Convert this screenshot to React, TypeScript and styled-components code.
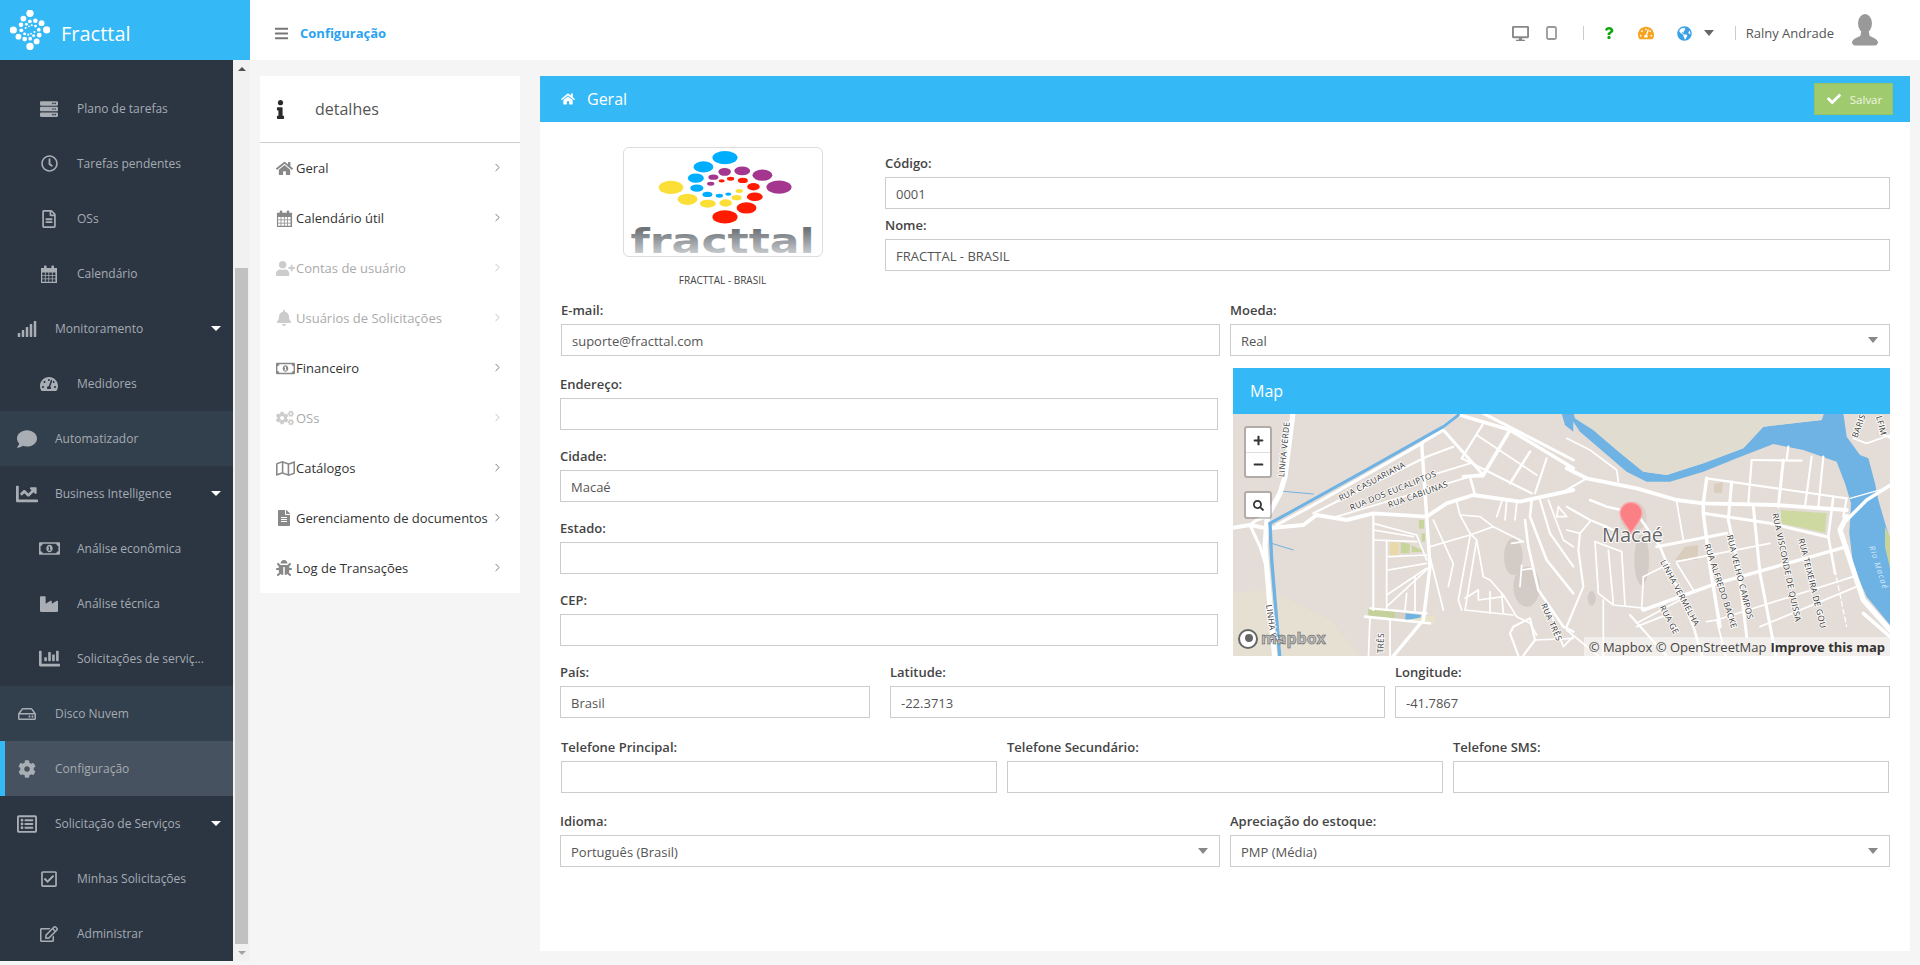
import React from 'react';
import styled, { createGlobalStyle } from 'styled-components';
import { ChevronRight } from 'lucide-react';
import {
  FaBars,
  FaBell,
  FaBug,
  FaChartBar,
  FaChartLine,
  FaCheck,
  FaCog,
  FaCogs,
  FaComment,
  FaDesktop,
  FaFileAlt,
  FaGlobeAmericas,
  FaHome,
  FaIndustry,
  FaInfo,
  FaMinus,
  FaPlus,
  FaQuestion,
  FaRegCheckSquare,
  FaRegClock,
  FaRegEdit,
  FaRegFileAlt,
  FaRegHdd,
  FaRegListAlt,
  FaRegMap,
  FaRegMoneyBillAlt,
  FaSearch,
  FaServer,
  FaSignal,
  FaTachometerAlt,
  FaUserPlus,
} from 'react-icons/fa';

const BLUE = '#35b8f6';

const GlobalStyle = createGlobalStyle`
  * { box-sizing: border-box; }
  html, body { margin: 0; height: 100%; overflow: hidden; }
  body { background: #f5f5f5; font-family: "Open Sans", "Liberation Sans", sans-serif; color: #555; }
`;

// Icons that the packages do not carry in this shape

const cells = (() => {
  let d = 'M1 3h16v15H1z';
  for (let r = 0; r < 3; r++) {
    for (let c = 0; c < 4; c++) {
      d += `M${2.2 + c * 3.5} ${7.4 + r * 3.4}h2.7v2.6h-2.7z`;
    }
  }
  return d;
})();

const CalendarIcon = ({ size = 18 }: { size?: number }) => (
  <svg width={size} height={size} viewBox="0 0 18 18" fill="currentColor">
    <path fillRule="evenodd" d={cells} />
    <rect x="4" y="0.5" width="2.6" height="4.5" rx="1" />
    <rect x="11.4" y="0.5" width="2.6" height="4.5" rx="1" />
  </svg>
);

const TabletIcon = () => (
  <svg width="11" height="14" viewBox="0 0 11 14">
    <rect x="1" y="1" width="9" height="12" rx="1.5" fill="#fff" stroke="#999" strokeWidth="1.8" />
  </svg>
);

const Avatar = () => (
  <svg width="26" height="32" viewBox="0 0 28 32" fill="#999" preserveAspectRatio="none">
    <ellipse cx="14" cy="9.5" rx="7.5" ry="9.5" />
    <path d="M10 17h8l1 5c4 1.5 8 3 9 6 0 2-1 3-3 3.500H3c-2-.5-3-1.500-3-3.500 1-3 5-4.500 9-6z" />
  </svg>
);

// [cx, cy, rx, ry, colour], read off the company logo
const spiral: [number, number, number, number, string][] = [
  [375, 82, 38, 20, '#00aeff'], [310, 110, 30, 17, '#00aeff'], [287, 144, 24, 14, '#00aeff'],
  [290, 174, 20, 11, '#00aeff'], [322, 193, 15, 8, '#00aeff'], [358, 197, 11, 6, '#00aeff'], [385, 192, 9, 5, '#00aeff'],
  [538, 171, 38, 20, '#a5368f'], [488, 135, 30, 17, '#a5368f'], [427, 122, 24, 13, '#a5368f'],
  [374, 125, 19, 12, '#a5368f'], [340, 141, 15, 8, '#a5368f'], [332, 161, 11, 6, '#a5368f'],
  [375, 261, 38, 20, '#ff1a00'], [440, 234, 30, 17, '#ff1a00'], [465, 200, 24, 13, '#ff1a00'],
  [461, 170, 19, 11, '#ff1a00'], [429, 151, 15, 8, '#ff1a00'], [392, 146, 11, 6, '#ff1a00'], [365, 152, 9, 5, '#ff1a00'],
  [212, 172, 37, 20, '#fbdf36'], [262, 208, 30, 17, '#fbdf36'], [323, 221, 24, 12, '#fbdf36'],
  [377, 219, 19, 11, '#fbdf36'], [410, 203, 15, 8, '#fbdf36'], [418, 183, 11, 6, '#fbdf36'],
];

const BrandMark = () => (
  <svg width="40" height="40" viewBox="30 30 120 120" fill="#fff">
    {spiral.map(([x, y, rx], i) => (
      <circle key={i} cx={90 + (x - 375) * 0.307} cy={90 + (y - 172) * 0.555} r={rx * 0.29} />
    ))}
  </svg>
);

const CompanyLogo = () => (
  <LogoSvg width="198" height="108" viewBox="71 53 596 326">
    <defs>
      <linearGradient id="wordmark" x1="0" y1="0" x2="0" y2="1">
        <stop offset="0.2" stopColor="#6f7479" />
        <stop offset="0.8" stopColor="#c4c8cb" />
      </linearGradient>
    </defs>
    {spiral.map(([x, y, rx, ry, fill], i) => (
      <ellipse key={i} cx={x} cy={y} rx={rx} ry={ry} fill={fill} />
    ))}
    <text x="90" y="369" fontFamily="DejaVu Sans, sans-serif" fontWeight="700" fontSize="102" textLength="556" lengthAdjust="spacingAndGlyphs" fill="url(#wordmark)">
      fracttal
    </text>
  </LogoSvg>
);

// Roads of the map: [width, "x,y x,y ..."], in the coordinates of the two crops of the street map
const westRoads: [number, string][] = [
  [12, '190,150 165,350 150,400 112,470 105,560 120,740 135,900'],
  [9, '0,505 60,495 110,505 220,495 260,465 350,480 430,460 590,470 650,430 730,405 870,425 1030,390'],
  [7, '60,495 90,560 112,630'],
  [7, '60,495 80,480 112,470'],
  [7, '140,495 250,435 575,250 690,160'],
  [5, '250,460 550,310 590,290 670,260'],
  [4, '320,470 720,350 760,350'],
  [4, '590,350 720,310'],
  [8, '575,250 590,470 600,620 580,780 480,900'],
  [8, '690,165 840,210 1030,325'],
  [7, '760,160 1030,300'],
  [7, '590,240 640,210 760,345'],
  [8, '840,210 760,345 700,350'],
  [5, '760,190 695,295 905,400'],
  [4, '740,225 920,345'],
  [6, '900,275 840,370'],
  [5, '950,295 915,400'],
  [6, '720,350 735,405'],
  [5, '430,460 430,750'],
  [4, '430,490 560,525 590,600'],
  [4, '430,510 550,530'],
  [4, '430,540 560,545'],
  [4, '470,540 470,745'],
  [4, '475,590 590,585'],
  [4, '475,630 590,610'],
  [4, '470,705 590,625'],
  [4, '470,740 600,620'],
  [5, '420,745 590,760'],
  [6, '405,770 600,790'],
  [4, '420,770 415,900'],
  [4, '480,780 480,900'],
  [4, '530,700 525,750'],
  [4, '555,650 555,755'],
  [4, '600,560 720,525 790,500 880,545'],
  [4, '610,480 660,590 670,610 655,680'],
  [4, '680,425 690,465 720,520 740,540 760,650 780,660 820,705 860,770 900,790 920,825'],
  [4, '690,465 750,470 790,500'],
  [4, '740,540 705,750 850,765'],
  [4, '720,530 685,720 695,750'],
  [4, '745,690 705,715'],
  [4, '745,690 745,720 820,710'],
  [4, '780,695 780,760'],
  [4, '815,700 820,760'],
  [4, '845,550 880,545'],
  [4, '875,615 870,680'],
  [4, '875,630 910,625'],
  [6, '885,480 895,560 925,690 1000,800 1030,815'],
  [6, '905,420 900,470 950,600 1030,700'],
  [5, '930,420 960,520 1030,620'],
  [4, '955,420 1000,540 1030,560'],
  [4, '800,470 815,425'],
  [4, '830,425 825,480'],
  [4, '860,430 855,480'],
  [5, '850,800 900,775 915,840 870,900 840,820 850,800'],
  [4, '915,840 1030,835'],
  [4, '950,725 1000,860 1030,830'],
  [4, '985,440 1010,470 980,470 985,440'],
  [4, '600,590 640,750'],
];

const eastRoads: [number, string][] = [
  [9, '-10,325 50,355 200,385 320,420 400,430 620,435 830,450'],
  [4, '-10,235 60,270 140,330 145,365'],
  [5, '-10,390 50,355'],
  [7, '400,460 600,490 770,530'],
  [5, '410,355 830,415'],
  [8, '410,355 400,430 400,460 420,620 450,800'],
  [7, '485,365 475,480 505,620 530,830'],
  [5, '545,300 535,430'],
  [5, '545,300 695,302'],
  [7, '640,300 625,440'],
  [5, '655,260 650,300'],
  [5, '725,290 705,440'],
  [5, '760,290 745,440'],
  [6, '790,410 775,530 795,640'],
  [5, '830,415 820,470'],
  [7, '260,560 470,520'],
  [8, '220,750 440,670 830,560'],
  [7, '550,440 570,640 620,900'],
  [6, '200,460 270,560 370,800 400,900'],
  [4, '320,425 340,540'],
  [4, '320,605 600,550'],
  [4, '220,650 300,610'],
  [4, '320,610 370,690'],
  [4, '200,790 330,720'],
  [4, '220,650 215,750'],
  [12, '830,470 810,510 830,570 880,720 960,810'],
  [8, '830,480 890,420 970,370'],
  [4, '440,780 850,650'],
  [4, '570,800 860,680'],
  [4, '410,785 440,780 470,900'],
  [8, '880,760 960,830'],
  [5, '180,765 300,900'],
  [4, '200,800 300,760'],
  [4, '-10,810 100,900'],
  [4, '100,720 100,900'],
  [4, '75,545 85,700 130,735 230,745'],
  [4, '75,545 155,575 165,735'],
  [4, '115,570 130,730'],
  [5, '-10,440 60,480 110,500 130,510'],
  [4, '-10,510 30,520 60,485'],
  [5, '30,520 25,570 40,680 -10,800'],
  [6, '60,420 110,440 155,450'],
  [4, '850,235 890,250 960,225'],
  [5, '930,220 965,235'],
  [3, '840,415 930,390'],
];

const roadLabels: [string, number, number, number][] = [
  ['RUA CASUARIANA', 332, 424, -28],
  ['RUA DOS EUCALIPTOS', 364, 452, -22],
  ['RUA CABIÚNAS', 478, 444, -20],
  ['LINHA VERDE', 162, 352, -84],
  ['LINHA VE', 108, 735, 82],
  ['TRÊS', 460, 880, -88],
  ['RUA TRÊS', 932, 735, 66],
];

const eastLabels: [string, number, number, number][] = [
  ['LINHA VERMELHA', 270, 605, 62],
  ['RUA GE', 268, 742, 62],
  ['RUA ALFREDO BACKE', 403, 555, 72],
  ['RUA VELHO CAMPOS', 470, 527, 76],
  ['RUA VISCONDE DE QUISSA', 607, 462, 78],
  ['RUA TEIXEIRA DE GOU', 685, 538, 76],
  ['BARIS', 862, 235, -70],
  ['LFIM', 918, 170, 75],
];

const StreetMap = () => (
  <svg width="657" height="242" viewBox="0 0 657 242">
    <rect width="657" height="242" fill="#e4dcd6" />
    <g transform="translate(-3,-54) scale(0.33333)">
      <polygon points="0,700 120,690 300,780 400,900 0,900" fill="#e5e0d2" />
      <polygon points="995,160 1005,195 1030,215 1030,160" fill="#6fb2e4" />
      <ellipse cx="850" cy="590" rx="28" ry="55" fill="#d3ccc6" />
      <ellipse cx="890" cy="680" rx="40" ry="60" fill="#d3ccc6" />
      <rect x="480" y="547" width="25" height="40" fill="#e8d9a9" />
      <polygon points="512,547 540,552 538,580 512,580" fill="#c8d59a" />
      <polygon points="545,556 585,575 545,577" fill="#c8d59a" />
      <polygon points="415,745 495,755 495,775 415,770" fill="#c4d19a" />
      <polygon points="495,755 530,760 528,780 495,776" fill="#d6cfc4" />
      <polygon points="527,760 573,765 568,786 525,783" fill="#6fb2e4" />
      <polygon points="530,780 615,765 615,790" fill="#e8e2c9" />
      <rect x="567" y="480" width="15" height="26" fill="#c8d59a" />
      <rect x="575" y="520" width="10" height="25" fill="#c8d59a" />
      <g fill="none" strokeLinejoin="round" strokeLinecap="round">
        <polyline points="160,394 250,402" stroke="#6fb2e4" strokeWidth="3" />
        <polyline points="125,550 190,570" stroke="#6fb2e4" strokeWidth="3" />
        {westRoads.map(([w, pts], i) => (
          <polyline key={i} points={pts} stroke="#fff" strokeWidth={w * 1.3} />
        ))}
        <polyline points="120,490 400,335 640,200 685,165" stroke="#6fb2e4" strokeWidth="9" />
        <polyline points="120,490 125,600 150,900" stroke="#6fb2e4" strokeWidth="10" />
      </g>
      {roadLabels.map(([t, x, y, r]) => (
        <MapLabel key={t + x} x={x} y={y} transform={`rotate(${r} ${x} ${y})`}>{t}</MapLabel>
      ))}
    </g>
    <g transform="translate(337,-54) scale(0.33333)">
      <polygon
        points="0,170 30,215 100,275 170,335 230,365 300,365 400,335 500,295 610,252 700,270 800,305 825,370 843,430 838,520 850,620 890,710 960,795 960,540 925,420 915,370 895,295 870,285 830,230 820,160 760,160 755,180 580,200 520,265 400,310 290,345 220,335 140,270 70,210 15,175 12,160 0,160"
        fill="#6fb2e4"
      />
      <polygon points="12,160 15,175 70,210 140,270 220,335 290,345 400,310 520,265 580,200 755,180 762,160" fill="#e0dccf" />
      <polygon points="633,450 770,460 765,518 633,490" fill="#cdd9a0" />
      <polygon points="945,500 960,530 960,625 945,560" fill="#c8d59a" />
      <polygon points="432,372 458,366 456,398 432,398" fill="#d9cdbd" />
      <polygon points="315,600 345,560 385,555 382,600" fill="#d9cdbd" />
      <ellipse cx="215" cy="600" rx="22" ry="75" fill="#d3ccc6" />
      <ellipse cx="190" cy="470" rx="40" ry="45" fill="#d9d2cc" />
      <ellipse cx="65" cy="715" rx="12" ry="22" fill="#d3ccc6" />
      <g fill="none" strokeLinejoin="round" strokeLinecap="round">
        {eastRoads.map(([w, pts], i) => (
          <polyline key={i} points={pts} stroke="#fff" strokeWidth={w * 1.3} />
        ))}
        <polyline points="780,560 830,800" stroke="#fff" strokeWidth="4" strokeDasharray="14 10" />
      </g>
      {eastLabels.map(([t, x, y, r]) => (
        <MapLabel key={t} x={x} y={y} transform={`rotate(${r} ${x} ${y})`}>{t}</MapLabel>
      ))}
      <WaterLabel x="897" y="560" transform="rotate(72 897 560)">Rio Macaé</WaterLabel>
      <CityLabel x="96" y="545">Macaé</CityLabel>
      <path d="M183 520c-18-30-33-42-33-60a33 33 0 0 1 66 0c0 18-15 30-33 60z" fill="#fb8085" stroke="#fba8a8" strokeWidth="4" />
    </g>
    <circle cx="15" cy="225" r="9" fill="#fff" stroke="#666" strokeWidth="2" />
    <circle cx="16" cy="224" r="4" fill="#666" />
    <BoxLogoText x="28" y="230">mapbox</BoxLogoText>
  </svg>
);

const LogoSvg = styled.svg`
  display: block;
  overflow: visible;
`;

const MapLabel = styled.text`
  font-family: "Open Sans", sans-serif;
  font-size: 25px;
  fill: #333;
  stroke: #fff;
  stroke-width: 5px;
  paint-order: stroke;
  letter-spacing: 1px;
`;

const WaterLabel = styled.text`
  font-family: "Open Sans", sans-serif;
  font-size: 24px;
  font-style: italic;
  fill: #d9ecfa;
  letter-spacing: 3px;
`;

const CityLabel = styled.text`
  font-family: "Open Sans", sans-serif;
  font-size: 60px;
  fill: #666;
  stroke: #fff;
  stroke-width: 6px;
  paint-order: stroke;
`;

const BoxLogoText = styled.text`
  font-family: "Open Sans", sans-serif;
  font-size: 16px;
  font-weight: 700;
  fill: #bbb;
  stroke: #555;
  stroke-width: 0.5px;
`;

// Data

type NavItem = { label: string; icon: React.ReactNode; level: 'top' | 'sub'; size?: number; caret?: boolean; tone?: 'soft' | 'active' };

const navItems: NavItem[] = [
  { label: 'Plano de tarefas', icon: <FaServer />, level: 'sub' },
  { label: 'Tarefas pendentes', icon: <FaRegClock />, level: 'sub', size: 17 },
  { label: 'OSs', icon: <FaRegFileAlt />, level: 'sub' },
  { label: 'Calendário', icon: <CalendarIcon />, level: 'sub' },
  { label: 'Monitoramento', icon: <FaSignal />, level: 'top', size: 20, caret: true },
  { label: 'Medidores', icon: <FaTachometerAlt />, level: 'sub' },
  { label: 'Automatizador', icon: <FaComment />, level: 'top', size: 20, tone: 'soft' },
  { label: 'Business Intelligence', icon: <FaChartLine />, level: 'top', size: 22, caret: true },
  { label: 'Análise econômica', icon: <FaRegMoneyBillAlt />, level: 'sub', size: 21 },
  { label: 'Análise técnica', icon: <FaIndustry />, level: 'sub' },
  { label: 'Solicitações de serviç...', icon: <FaChartBar />, level: 'sub', size: 21 },
  { label: 'Disco Nuvem', icon: <FaRegHdd />, level: 'top', tone: 'soft' },
  { label: 'Configuração', icon: <FaCog />, level: 'top', tone: 'active' },
  { label: 'Solicitação de Serviços', icon: <FaRegListAlt />, level: 'top', size: 20, caret: true },
  { label: 'Minhas Solicitações', icon: <FaRegCheckSquare />, level: 'sub' },
  { label: 'Administrar', icon: <FaRegEdit />, level: 'sub' },
];

const detailItems: { label: string; icon: React.ReactNode; size?: number; muted?: boolean }[] = [
  { label: 'Geral', icon: <FaHome />, size: 17 },
  { label: 'Calendário útil', icon: <CalendarIcon size={17} /> },
  { label: 'Contas de usuário', icon: <FaUserPlus />, size: 19, muted: true },
  { label: 'Usuários de Solicitações', icon: <FaBell />, muted: true },
  { label: 'Financeiro', icon: <FaRegMoneyBillAlt />, size: 19 },
  { label: 'OSs', icon: <FaCogs />, size: 18, muted: true },
  { label: 'Catálogos', icon: <FaRegMap />, size: 19 },
  { label: 'Gerenciamento de documentos', icon: <FaFileAlt /> },
  { label: 'Log de Transações', icon: <FaBug /> },
];

// Styled Components

const Page = styled.div`
  width: 1920px;
  height: 965px;
  display: flex;
  flex-direction: column;
  overflow: hidden;
`;

const TopBar = styled.header`
  height: 60px;
  flex: none;
  display: flex;
  background: #fff;
`;

const Brand = styled.div`
  width: 250px;
  background: ${BLUE};
  display: flex;
  align-items: center;
  padding-left: 10px;
  gap: 11px;
  color: #fff;
`;

const BrandName = styled.span`
  font-size: 20px;
  margin-top: 6px;
`;

const TopLeft = styled.div`
  flex: 1;
  display: flex;
  align-items: center;
  padding: 6px 0 0 24px;
  gap: 11px;
  color: #777;
  font-size: 15px;
`;

const TopTitle = styled.span`
  color: #2ba3f0;
  font-size: 13px;
  font-weight: 700;
`;

const TopRight = styled.div`
  display: flex;
  align-items: center;
  padding: 6px 42px 0 0;
`;

const TopIcon = styled.span<{ $color: string; $size: number; $left: number }>`
  display: flex;
  color: ${(p) => p.$color};
  font-size: ${(p) => p.$size}px;
  margin-left: ${(p) => p.$left}px;
`;

const TopCaret = styled.span`
  width: 0;
  height: 0;
  margin-left: 12px;
  border-style: solid;
  border-width: 6px 5px 0;
  border-color: #666 transparent transparent;
`;

const TopDivider = styled.span<{ $left: number }>`
  width: 1px;
  height: 14px;
  background: #ccc;
  margin-left: ${(p) => p.$left}px;
`;

const UserName = styled.span`
  font-size: 13px;
  color: #555;
  margin-left: 10px;
  margin-right: 18px;
`;

const AvatarSlot = styled.span`
  display: flex;
  margin-top: -7px;
`;

const Body = styled.div`
  flex: 1;
  display: flex;
  min-height: 0;
`;

const SideColumn = styled.div`
  width: 250px;
  flex: none;
  display: flex;
  margin-bottom: 4px;
`;

const Sidebar = styled.nav`
  width: 233px;
  background: #2c3643;
  padding-top: 21px;
`;

const NavRow = styled.div<{ $level: string; $tone?: string }>`
  height: 55px;
  display: flex;
  align-items: center;
  position: relative;
  padding-left: ${(p) => (p.$level === 'sub' ? 38 : 16)}px;
  color: #a5abb2;
  font-size: 12px;
  background: ${(p) => (p.$tone === 'active' ? '#46525f' : p.$tone === 'soft' ? '#323f4c' : 'transparent')};
  border-left: ${(p) => (p.$tone === 'active' ? `5px solid ${BLUE}` : 'none')};
  ${(p) => (p.$tone === 'active' ? 'padding-left: 11px;' : '')}
`;

const NavIcon = styled.span<{ $size?: number }>`
  width: 22px;
  display: flex;
  justify-content: center;
  flex: none;
  font-size: ${(p) => p.$size ?? 18}px;
  color: #a9aeb4;
  margin-right: 17px;
`;

const NavCaret = styled.span`
  position: absolute;
  right: 12px;
  top: 25px;
  width: 0;
  height: 0;
  border-style: solid;
  border-width: 5px 5px 0;
  border-color: #fff transparent transparent;
`;

const Scrollbar = styled.div`
  width: 17px;
  background: #f1f1f1;
  display: flex;
  flex-direction: column;
  align-items: center;
`;

const ScrollArrow = styled.span<{ $down?: boolean }>`
  width: 0;
  height: 0;
  flex: none;
  margin: 7px 0 6px;
  border-style: solid;
  border-width: ${(p) => (p.$down ? '4px 4px 0' : '0 4px 4px')};
  border-color: ${(p) => (p.$down ? '#a3a3a3 transparent transparent' : 'transparent transparent #505050')};
`;

const ScrollThumb = styled.div`
  width: 13px;
  height: 676px;
  margin-top: 191px;
  background: #c1c1c1;
`;

const Content = styled.main`
  flex: 1;
  display: flex;
  align-items: flex-start;
  gap: 20px;
  padding: 16px 10px 14px;
`;

const DetailsPanel = styled.aside`
  width: 260px;
  background: #fff;
`;

const DetailsHead = styled.div`
  height: 67px;
  display: flex;
  align-items: center;
  padding-left: 15px;
  border-bottom: 1px solid #ccc;
  font-size: 16px;
  color: #555;
`;

const DetailsGlyph = styled.span`
  display: flex;
  width: 44px;
  font-size: 19px;
  color: #2a2a2a;
  margin-left: -4px;
`;

const DetailRow = styled.div<{ $muted?: boolean }>`
  height: 50px;
  display: flex;
  align-items: center;
  padding: 0 16px 0 16px;
  font-size: 13px;
  color: ${(p) => (p.$muted ? '#aaa' : '#333')};
`;

const DetailIcon = styled.span<{ $muted?: boolean; $size?: number }>`
  width: 20px;
  flex: none;
  display: flex;
  font-size: ${(p) => p.$size ?? 16}px;
  color: ${(p) => (p.$muted ? '#ccc' : '#888')};
  svg { flex: none; }
`;

const DetailLabel = styled.span`
  flex: 1;
  white-space: nowrap;
`;

const DetailArrow = styled.span<{ $muted?: boolean }>`
  display: flex;
  margin-top: -2px;
  color: ${(p) => (p.$muted ? '#bbb' : '#666')};
`;

const MainPanel = styled.section`
  flex: 1;
  align-self: stretch;
  background: #fff;
`;

const PanelHead = styled.div`
  height: 46px;
  background: ${BLUE};
  display: flex;
  align-items: center;
  justify-content: space-between;
  padding: 0 17px 0 21px;
  color: #fff;
  font-size: 16px;
`;

const PanelTitle = styled.span`
  display: flex;
  align-items: center;
  gap: 12px;
  font-size: 16px;
  svg { font-size: 14px; }
`;

const SaveButton = styled.button`
  width: 79px;
  height: 32px;
  display: flex;
  align-items: center;
  justify-content: center;
  gap: 9px;
  padding-right: 4px;
  border: 1px solid #93c364;
  background: #a0ca6e;
  color: #eef6e4;
  font: 400 11.5px "Open Sans", sans-serif;
  svg { font-size: 14px; color: #fff; }
`;

const Form = styled.div`
  padding: 25px 20px 0;
`;

const TopSection = styled.div`
  display: flex;
  height: 124px;
  margin-bottom: 27px;
`;

const LogoColumn = styled.div`
  width: 325px;
  flex: none;
  display: flex;
  flex-direction: column;
  align-items: center;
`;

const LogoFrame = styled.div`
  width: 200px;
  height: 110px;
  flex: none;
  border: 1px solid #ddd;
  border-radius: 6px;
  background: #fff;
`;

const LogoCaption = styled.div`
  margin-top: 16px;
  font-size: 10px;
  line-height: 14px;
  color: #444;
`;

const CodeColumn = styled.div`
  flex: 1;
  display: flex;
  flex-direction: column;
  gap: 4px;
  padding-top: 4px;
`;

const Field = styled.div<{ $inset?: number }>`
  margin-left: ${(p) => p.$inset ?? 0}px;
`;

const Label = styled.label`
  display: block;
  height: 26px;
  line-height: 24px;
  font-size: 13px;
  font-weight: 600;
  color: #444;
`;

const Input = styled.input`
  display: block;
  width: 100%;
  height: 32px;
  padding: 2px 10px 0;
  border: 1px solid #ccc;
  border-radius: 0;
  outline: none;
  background: #fff;
  color: #555;
  font: 400 13px "Open Sans", sans-serif;
`;

const SelectBox = styled.div`
  height: 32px;
  padding: 2px 10px 0;
  border: 1px solid #ccc;
  display: flex;
  align-items: center;
  justify-content: space-between;
  font-size: 13px;
  color: #555;
`;

const SelectCaret = styled.span`
  width: 0;
  height: 0;
  margin: -2px 1px 0 0;
  border-style: solid;
  border-width: 6px 5px 0;
  border-color: #888 transparent transparent;
`;

const TwoColumns = styled.div`
  display: grid;
  grid-template-columns: 660px 660px;
  column-gap: 10px;
`;

const LeftStack = styled.div`
  width: 658px;
  display: flex;
  flex-direction: column;
  gap: 14px;
`;

const EmailField = styled(Field)`
  width: 659px;
  margin-bottom: 2px;
`;

const RightStack = styled.div`
  height: 358px;
  display: flex;
  flex-direction: column;
`;

const MapCard = styled.div`
  margin: 12px 0 0 3px;
  width: 657px;
  height: 288px;
`;

const MapHead = styled.div`
  height: 46px;
  background: ${BLUE};
  color: #fff;
  display: flex;
  align-items: center;
  padding-left: 17px;
  font-size: 16px;
`;

const MapCanvas = styled.div`
  position: relative;
  height: 242px;
  overflow: hidden;
  svg { display: block; }
`;

const MapButtons = styled.div<{ $top: number }>`
  position: absolute;
  left: 11px;
  top: ${(p) => p.$top}px;
  width: 28px;
  border: 2px solid rgba(0, 0, 0, 0.22);
  border-radius: 3px;
  background: #fff;
  background-clip: padding-box;
`;

const MapButton = styled.div`
  height: 24px;
  display: flex;
  align-items: center;
  justify-content: center;
  font-size: 11px;
  color: #333;
  & + & { border-top: 1px solid #ddd; }
`;

const Attribution = styled.div`
  position: absolute;
  right: 0;
  bottom: 0;
  height: 19px;
  padding: 0 5px;
  display: flex;
  align-items: center;
  gap: 4px;
  background: rgba(255, 255, 255, 0.5);
  font-size: 13px;
  color: #444;
  b { font-weight: 700; color: #333; }
`;

const CoordRow = styled.div<{ $columns: string; $gap: number; $top: number; $pad?: number }>`
  display: grid;
  grid-template-columns: ${(p) => p.$columns};
  column-gap: ${(p) => p.$gap}px;
  margin-top: ${(p) => p.$top}px;
  padding: 0 ${(p) => p.$pad ?? 0}px;
`;

const App = () => {
  return (
    <Page>
      <GlobalStyle />
      <TopBar>
        <Brand>
          <BrandMark />
          <BrandName>Fracttal</BrandName>
        </Brand>
        <TopLeft>
          <FaBars />
          <TopTitle>Configuração</TopTitle>
        </TopLeft>
        <TopRight>
          <TopIcon $color="#888" $size={17} $left={0}><FaDesktop /></TopIcon>
          <TopIcon $color="#999" $size={14} $left={17}><TabletIcon /></TopIcon>
          <TopDivider $left={26} />
          <TopIcon $color="#0aa60a" $size={12} $left={19}><FaQuestion /></TopIcon>
          <TopIcon $color="#f7a21c" $size={16} $left={23}><FaTachometerAlt /></TopIcon>
          <TopIcon $color="#3ba0e6" $size={15} $left={23}><FaGlobeAmericas /></TopIcon>
          <TopCaret />
          <TopDivider $left={21} />
          <UserName>Ralny Andrade</UserName>
          <AvatarSlot><Avatar /></AvatarSlot>
        </TopRight>
      </TopBar>

      <Body>
        <SideColumn>
          <Sidebar>
            {navItems.map((item) => (
              <NavRow key={item.label} $level={item.level} $tone={item.tone}>
                <NavIcon $size={item.size}>{item.icon}</NavIcon>
                {item.label}
                {item.caret && <NavCaret />}
              </NavRow>
            ))}
          </Sidebar>
          <Scrollbar>
            <ScrollArrow />
            <ScrollThumb />
            <ScrollArrow $down />
          </Scrollbar>
        </SideColumn>

        <Content>
          <DetailsPanel>
            <DetailsHead>
              <DetailsGlyph><FaInfo /></DetailsGlyph>
              detalhes
            </DetailsHead>
            {detailItems.map((item) => (
              <DetailRow key={item.label} $muted={item.muted}>
                <DetailIcon $muted={item.muted} $size={item.size}>{item.icon}</DetailIcon>
                <DetailLabel>{item.label}</DetailLabel>
                <DetailArrow $muted={item.muted}><ChevronRight size={13} strokeWidth={1.6} /></DetailArrow>
              </DetailRow>
            ))}
          </DetailsPanel>

          <MainPanel>
            <PanelHead>
              <PanelTitle><FaHome />Geral</PanelTitle>
              <SaveButton><FaCheck />Salvar</SaveButton>
            </PanelHead>
            <Form>
              <TopSection>
                <LogoColumn>
                  <LogoFrame><CompanyLogo /></LogoFrame>
                  <LogoCaption>FRACTTAL - BRASIL</LogoCaption>
                </LogoColumn>
                <CodeColumn>
                  <Field>
                    <Label>Código:</Label>
                    <Input readOnly value="0001" />
                  </Field>
                  <Field>
                    <Label>Nome:</Label>
                    <Input readOnly value="FRACTTAL - BRASIL" />
                  </Field>
                </CodeColumn>
              </TopSection>

              <TwoColumns>
                <LeftStack>
                  <EmailField $inset={1}>
                    <Label>E-mail:</Label>
                    <Input readOnly value="suporte@fracttal.com" />
                  </EmailField>
                  <Field>
                    <Label>Endereço:</Label>
                    <Input readOnly value="" />
                  </Field>
                  <Field>
                    <Label>Cidade:</Label>
                    <Input readOnly value="Macaé" />
                  </Field>
                  <Field>
                    <Label>Estado:</Label>
                    <Input readOnly value="" />
                  </Field>
                  <Field>
                    <Label>CEP:</Label>
                    <Input readOnly value="" />
                  </Field>
                </LeftStack>
                <RightStack>
                  <Field>
                    <Label>Moeda:</Label>
                    <SelectBox>Real<SelectCaret /></SelectBox>
                  </Field>
                  <MapCard>
                    <MapHead>Map</MapHead>
                    <MapCanvas>
                      <StreetMap />
                      <MapButtons $top={12}>
                        <MapButton><FaPlus /></MapButton>
                        <MapButton><FaMinus /></MapButton>
                      </MapButtons>
                      <MapButtons $top={77}>
                        <MapButton><FaSearch /></MapButton>
                      </MapButtons>
                      <Attribution>
                        <span>© Mapbox © OpenStreetMap</span>
                        <b>Improve this map</b>
                      </Attribution>
                    </MapCanvas>
                  </MapCard>
                </RightStack>
              </TwoColumns>

              <CoordRow $columns="310px 505px 495px" $gap={10} $top={4}>
                <Field>
                  <Label>País:</Label>
                  <Input readOnly value="Brasil" />
                </Field>
                <Field $inset={10}>
                  <Label>Latitude:</Label>
                  <Input readOnly value="-22.3713" />
                </Field>
                <Field>
                  <Label>Longitude:</Label>
                  <Input readOnly value="-41.7867" />
                </Field>
              </CoordRow>

              <CoordRow $columns="repeat(3, 436px)" $gap={10} $top={17} $pad={1}>
                <Field>
                  <Label>Telefone Principal:</Label>
                  <Input readOnly value="" />
                </Field>
                <Field>
                  <Label>Telefone Secundário:</Label>
                  <Input readOnly value="" />
                </Field>
                <Field>
                  <Label>Telefone SMS:</Label>
                  <Input readOnly value="" />
                </Field>
              </CoordRow>

              <CoordRow $columns="660px 660px" $gap={10} $top={16}>
                <Field>
                  <Label>Idioma:</Label>
                  <SelectBox>Português (Brasil)<SelectCaret /></SelectBox>
                </Field>
                <Field>
                  <Label>Apreciação do estoque:</Label>
                  <SelectBox>PMP (Média)<SelectCaret /></SelectBox>
                </Field>
              </CoordRow>
            </Form>
          </MainPanel>
        </Content>
      </Body>
    </Page>
  );
};

export default App;
